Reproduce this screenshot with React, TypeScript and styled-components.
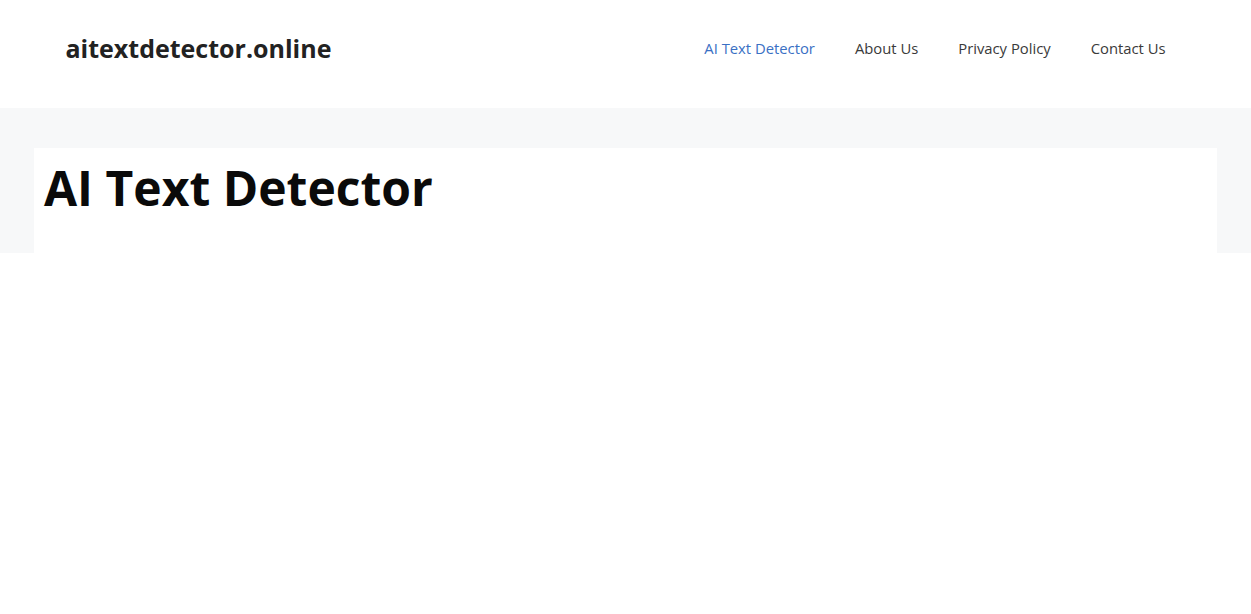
import React from "react";
import styled, { createGlobalStyle } from "styled-components";

const Global = createGlobalStyle`
  html, body { margin: 0; padding: 0; background: #ffffff; }
  body { font-family: "Open Sans", "Liberation Sans", sans-serif; color: #222222; }
  * { box-sizing: border-box; }
`;

const Header = styled.header`
  background: #ffffff;
  height: 108px;
`;

const HeaderInner = styled.div`
  max-width: 1200px;
  margin: 0 auto;
  height: 100%;
  padding: 0 40px 13px;
  display: flex;
  align-items: center;
  justify-content: space-between;
`;

const Logo = styled.a`
  font-family: "Open Sans", sans-serif;
  font-weight: 700;
  font-size: 25px;
  color: #222222;
  text-decoration: none;
`;

const Nav = styled.nav`
  display: flex;
`;

const NavLink = styled.a<{ $active?: boolean }>`
  font-size: 14.8px;
  line-height: 60px;
  padding: 0 20px;
  color: ${(p) => (p.$active ? "#3a70c4" : "#3a3a3a")};
  text-decoration: none;
`;

const Band = styled.div`
  background: #f7f8f9;
  padding: 40px 34px 0;
  height: 145px;
`;

const Card = styled.article`
  background: #ffffff;
  height: 105px;
  padding: 0 10px;
`;

const Title = styled.h1`
  margin: 0;
  font-size: 48px;
  font-weight: 700;
  line-height: 79px;
  color: #0a0a0a;
`;

export default function App() {
  return (
    <>
      <Global />
      <Header>
        <HeaderInner>
          <Logo href="#">aitextdetector.online</Logo>
          <Nav>
            <NavLink href="#" $active>AI Text Detector</NavLink>
            <NavLink href="#">About Us</NavLink>
            <NavLink href="#">Privacy Policy</NavLink>
            <NavLink href="#">Contact Us</NavLink>
          </Nav>
        </HeaderInner>
      </Header>
      <Band>
        <Card>
          <Title>AI Text Detector</Title>
        </Card>
      </Band>
    </>
  );
}
